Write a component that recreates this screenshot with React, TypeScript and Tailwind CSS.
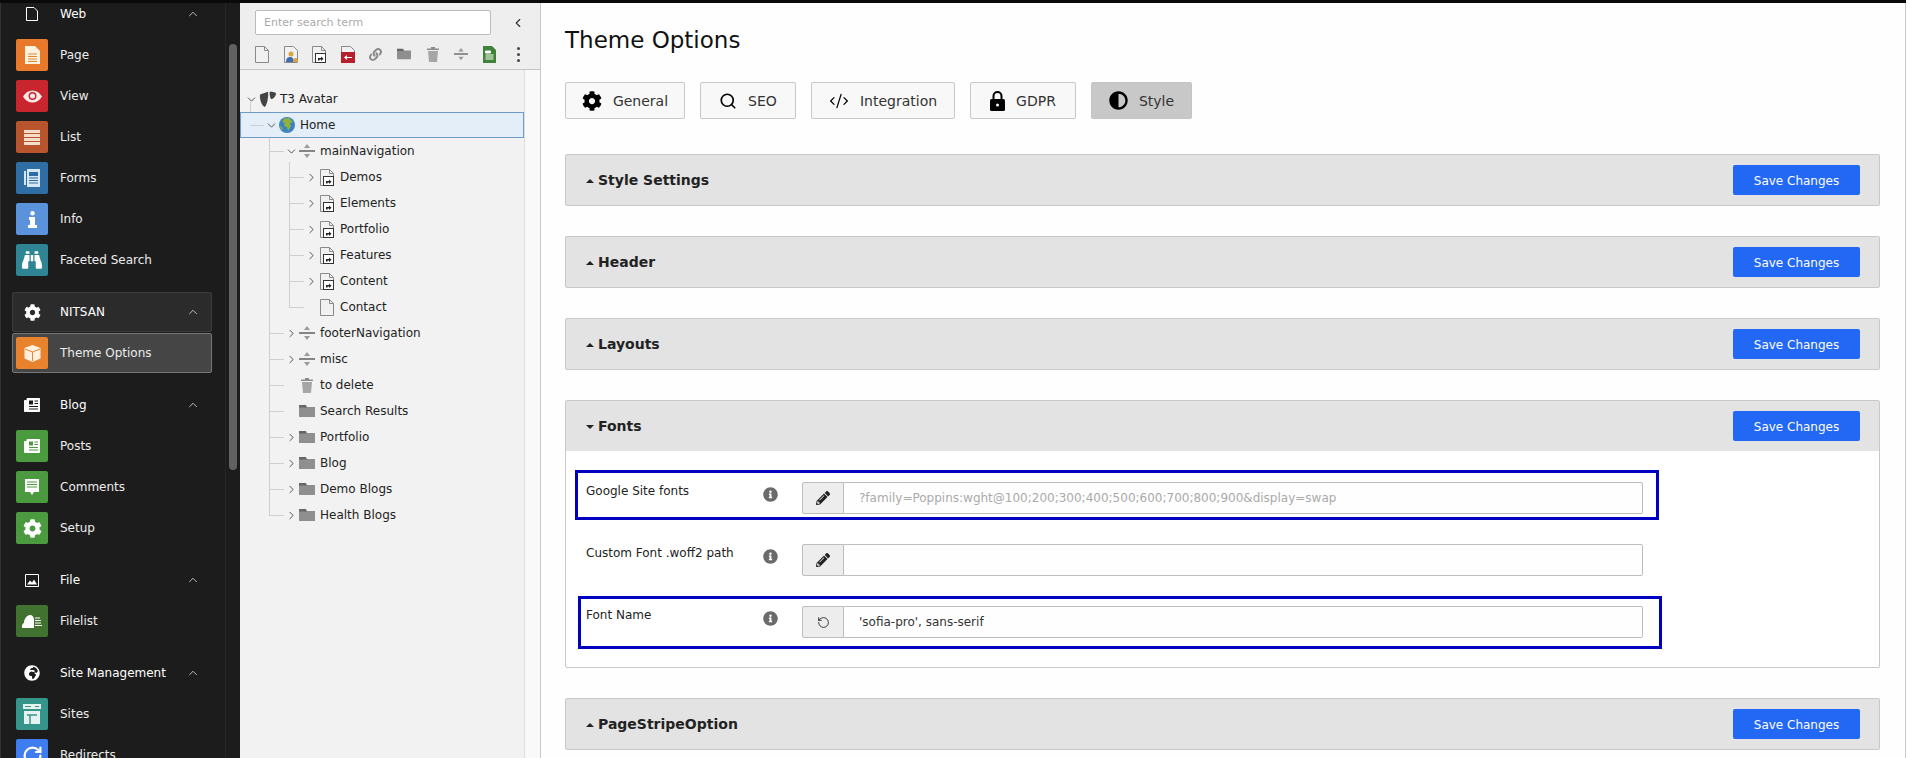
import { ChevronDown, ChevronLeft, ChevronRight, ChevronUp, CodeXml, RotateCcw, RotateCw, Search } from "lucide-react";
import type { ReactNode } from "react";
import {
  FaAdjust,
  FaBinoculars,
  FaCog,
  FaGlobeAfrica,
  FaInfoCircle,
  FaLink,
  FaPencilAlt,
} from "react-icons/fa";

const DocIcon = ({ fill = "#f1f1f1", stroke = "#8a8a8a" }) => (
  <svg width="14" height="17" viewBox="0 0 14 17">
    <path d="M.5.5h9l4 4v12H.5z" fill={fill} stroke={stroke} />
    <path d="M9.5.5v4h4" fill="none" stroke={stroke} />
  </svg>
);

const ShortcutDoc = () => (
  <svg width="14" height="17" viewBox="0 0 14 17">
    <path d="M.5.5h9l4 4v12H.5z" fill="#f1f1f1" stroke="#8a8a8a" />
    <path d="M9.5.5v4h4" fill="none" stroke="#8a8a8a" />
    <rect x="3.500" y="7.500" width="10" height="9" fill="#fff" stroke="#333" />
    <path d="M6 14.500v-2.500h3v-1.500l2.500 2.200-2.500 2.200v-1.400H7.500v1z" fill="#222" />
  </svg>
);

const PageTypeDivider = () => (
  <svg width="16" height="16" viewBox="0 0 16 16">
    <path d="M0 8h16" stroke="#555" strokeWidth="1.400" />
    <path d="M8 1l3 4H5zM8 15l-3-4h6z" fill="#9a9a9a" />
  </svg>
);

const FolderIcon = () => (
  <svg width="16" height="12" viewBox="0 0 16 12">
    <path d="M0 2h16v10H0z" fill="#8f8f8f" />
    <path d="M0 0h7l1 2.600H0z" fill="#666" />
  </svg>
);

const TrashIcon = () => (
  <svg width="12" height="15" viewBox="0 0 12 15">
    <path d="M1 4h10l-1 11H2z" fill="#a6a6a6" />
    <path d="M0 1.500h12V3H0zM4 0h4v1.500H4z" fill="#8c8c8c" />
  </svg>
);

const Globe = () => (
  <svg width="16" height="16" viewBox="0 0 16 16">
    <circle cx="8" cy="8" r="8" fill="#3b82c4" />
    <path d="M5 1.500l5-.5 4 4-3 1 1 3-3 5-1-4-3-1 1-3-3-1zM1 9l2 1 1 3-2-1z" fill="#8fb339" />
  </svg>
);

const Typo3 = () => (
  <svg width="17" height="17" viewBox="0 0 16 16">
    <path d="M1 3.200L8.500.8c.5 4.200-.6 11.800-3 14.200C3 14.500.2 8 1 3.200z" fill="#444" />
    <path d="M10 .8c3 0 6 .5 6 1.700 0 2-2.500 5-4.500 5C10.500 7.500 9.800 3 10 .8z" fill="#444" />
  </svg>
);

const Tile = ({ color, children }: { color: string; children: ReactNode }) => (
  <span
    style={{ backgroundColor: color }}
    className="flex h-8 w-8 shrink-0 items-center justify-center rounded-[2px] text-white"
  >
    {children}
  </span>
);

const PageGlyph = () => (
  <svg width="15" height="18" viewBox="0 0 15 18">
    <path d="M0 0h10l5 5v13H0z" fill="#fff3e0" />
    <path d="M3 8h9M3 10.500h9M3 13h9M3 15.500h9" stroke="#e0852e" strokeWidth="1" />
  </svg>
);

const EyeGlyph = () => (
  <svg width="19" height="13" viewBox="0 0 19 13">
    <path d="M0 6.500C2.500 2.500 5.500.5 9.500.5s7 2 9.500 6c-2.500 4-5.500 6-9.500 6S2.500 10.500 0 6.500z" fill="#fbe9e9" />
    <circle cx="9.500" cy="6" r="4" fill="#c9252e" />
    <circle cx="9.500" cy="6" r="2.500" fill="#fbe9e9" />
  </svg>
);

const ListGlyph = () => (
  <svg width="16" height="15" viewBox="0 0 16 15">
    <path d="M0 0h16v15H0z" fill="#f5dccb" />
    <path d="M0 3.500h16M0 7.500h16M0 11.500h16" stroke="#b9552c" strokeWidth="1.200" />
  </svg>
);

const FormGlyph = () => (
  <svg width="16" height="18" viewBox="0 0 16 18">
    <path d="M0 2h2v14H0z" fill="#d6e6f2" />
    <path d="M3 0h13v18H3z" fill="#d6e6f2" />
    <path d="M5 3h9v4H5z" fill="#2f6ea5" />
    <path d="M5 9h9M5 11.500h9M5 14h9" stroke="#2f6ea5" />
  </svg>
);

const InfoGlyph = () => (
  <svg width="9" height="17" viewBox="0 0 9 17">
    <circle cx="4.500" cy="2.200" r="2.200" fill="#fff" />
    <path d="M1 6h6v8h2v3H0v-3h2V9H1z" fill="#fff" />
  </svg>
);

const NewsGlyph = ({ bg }: { bg: string }) => (
  <svg width="16" height="14" viewBox="0 0 16 14">
    <path d="M.5 2.500h2v11h-2zM3 .5h12.500v13H3z" fill="#fff" stroke="#fff" />
    <path d="M5 2.500h4v4H5z" fill={bg} />
    <path d="M10.500 3h3.500M10.500 5.500h3.500M5 8.500h9M5 11h9" stroke={bg} />
  </svg>
);

const CommentGlyph = () => (
  <svg width="15" height="16" viewBox="0 0 15 16">
    <path d="M0 0h14v13H9l-2 3-2-3H0z" fill="#fff" />
    <path d="M2 3h10M2 5.500h10M2 8h10" stroke="#4b9a3f" />
  </svg>
);

const CubeGlyph = () => (
  <svg width="17" height="17" viewBox="0 0 17 17">
    <path d="M8.500 0l8 3v10.500L8.500 17l-8-3.500V3z" fill="#fff1df" />
    <path d="M1 4l7.500 3L16 4M8.500 7v9" stroke="#e9822c" fill="none" />
  </svg>
);

const CloudGlyph = () => (
  <svg width="20" height="13" viewBox="0 0 20 13">
    <path d="M0 13c-.3-3 .5-4.500 2-5 0-4 3-8 6-8 2.500 0 3.500 2 4 4v9z" fill="#fff" />
    <path d="M13 3h5M13 5.500h6M13 8h6M13 10.500h7" stroke="#fff" />
  </svg>
);

const SitesGlyph = () => (
  <svg width="18" height="20" viewBox="0 0 18 20">
    <path d="M0 0h18v5H0z" fill="#e6f2ef" />
    <path d="M1 7h16v13H1z" fill="#e6f2ef" />
    <path d="M4 11h10M7 11v9" stroke="#36958a" strokeWidth="1.500" />
    <path d="M2 2.500h6M12 2.500h4" stroke="#36958a" />
  </svg>
);

const LockGlyph = () => (
  <svg width="15" height="20" viewBox="0 0 15 20">
    <path d="M3.500 9V5a4 4 0 018 0v4" fill="none" stroke="#000" strokeWidth="2" />
    <rect x="0" y="8" width="15" height="12" rx="1.500" fill="#000" />
    <circle cx="7.500" cy="14" r="1.500" fill="#fff" />
  </svg>
);

const NavHeader = ({ icon, label, boxed }: { icon: ReactNode; label: string; boxed?: boolean }) => (
  <div
    className={`mx-3 flex h-10 items-center rounded-[2px] border text-white ${
      boxed ? "border-[#3c3c3c] bg-[#2b2b2b]" : "border-transparent"
    }`}
  >
    <span className="ml-[3px] flex w-8 shrink-0 justify-center text-white">{icon}</span>
    <span className="ml-3 flex-1">{label}</span>
    <ChevronUp size={14} strokeWidth={1.5} className="mr-[11px] text-[#cfcfcf]" />
  </div>
);

const NavItem = ({ tile, label, active }: { tile: ReactNode; label: string; active?: boolean }) => (
  <div
    className={`mx-3 flex h-10 items-center gap-3 rounded-[2px] border pl-[3px] text-[#ececec] ${
      active ? "border-[#777] bg-[#454545]" : "border-transparent"
    }`}
  >
    {tile}
    <span>{label}</span>
  </div>
);

const Sidebar = () => (
  <aside className="relative h-full w-[240px] shrink-0 overflow-hidden border-l border-[#333] bg-[#1c1c1c] text-[12px]">
    <div className="-ml-px -mt-[9px] flex w-[224px] flex-col gap-3">
      <div className="flex flex-col gap-px">
        <NavHeader
          label="Web"
          icon={
            <svg width="12" height="14" viewBox="0 0 12 14">
              <path d="M.5.500h7.500l3.500 3.500v9.500H.5z" fill="none" stroke="#fff" />
            </svg>
          }
        />
        <NavItem label="Page" tile={<Tile color="#e8792b"><PageGlyph /></Tile>} />
        <NavItem label="View" tile={<Tile color="#c9252e"><EyeGlyph /></Tile>} />
        <NavItem label="List" tile={<Tile color="#b9552c"><ListGlyph /></Tile>} />
        <NavItem label="Forms" tile={<Tile color="#2f6ea5"><FormGlyph /></Tile>} />
        <NavItem label="Info" tile={<Tile color="#5a93dc"><InfoGlyph /></Tile>} />
        <NavItem label="Faceted Search" tile={<Tile color="#2f8594"><FaBinoculars size={20} /></Tile>} />
      </div>
      <div className="flex flex-col gap-px">
        <NavHeader boxed label="NITSAN" icon={<FaCog size={17} />} />
        <NavItem active label="Theme Options" tile={<Tile color="#e9822c"><CubeGlyph /></Tile>} />
      </div>
      <div className="flex flex-col gap-px">
        <NavHeader label="Blog" icon={<NewsGlyph bg="#1c1c1c" />} />
        <NavItem label="Posts" tile={<Tile color="#4b9a3f"><NewsGlyph bg="#4b9a3f" /></Tile>} />
        <NavItem label="Comments" tile={<Tile color="#4b9a3f"><CommentGlyph /></Tile>} />
        <NavItem label="Setup" tile={<Tile color="#4b9a3f"><FaCog size={19} /></Tile>} />
      </div>
      <div className="flex flex-col gap-px">
        <NavHeader
          label="File"
          icon={
            <svg width="14" height="13" viewBox="0 0 14 13">
              <path d="M.5.500h13v12H.5z" fill="none" stroke="#fff" />
              <path d="M2 10.500l3-4 2 2 2-3 3 5z" fill="#fff" />
            </svg>
          }
        />
        <NavItem label="Filelist" tile={<Tile color="#42722f"><CloudGlyph /></Tile>} />
      </div>
      <div className="flex flex-col gap-px">
        <NavHeader label="Site Management" icon={<FaGlobeAfrica size={16} />} />
        <NavItem label="Sites" tile={<Tile color="#36958a"><SitesGlyph /></Tile>} />
        <NavItem label="Redirects" tile={<Tile color="#3f7cf0"><RotateCw size={21} strokeWidth={2.5} /></Tile>} />
      </div>
    </div>
    <div className="absolute right-[3px] top-[41px] h-[426px] w-2 rounded-full bg-[#616161]" />
    <div className="absolute right-[14px] top-0 h-full w-px bg-[#262626]" />
  </aside>
);

type TreeEntry = {
  label: string;
  depth: number;
  icon: ReactNode;
  arrow?: "open" | "closed";
  selected?: boolean;
};

const treeRows: TreeEntry[] = [
  { label: "T3 Avatar", depth: 0, icon: <Typo3 />, arrow: "open" },
  { label: "Home", depth: 1, icon: <Globe />, arrow: "open", selected: true },
  { label: "mainNavigation", depth: 2, icon: <PageTypeDivider />, arrow: "open" },
  { label: "Demos", depth: 3, icon: <ShortcutDoc />, arrow: "closed" },
  { label: "Elements", depth: 3, icon: <ShortcutDoc />, arrow: "closed" },
  { label: "Portfolio", depth: 3, icon: <ShortcutDoc />, arrow: "closed" },
  { label: "Features", depth: 3, icon: <ShortcutDoc />, arrow: "closed" },
  { label: "Content", depth: 3, icon: <ShortcutDoc />, arrow: "closed" },
  { label: "Contact", depth: 3, icon: <DocIcon /> },
  { label: "footerNavigation", depth: 2, icon: <PageTypeDivider />, arrow: "closed" },
  { label: "misc", depth: 2, icon: <PageTypeDivider />, arrow: "closed" },
  { label: "to delete", depth: 2, icon: <TrashIcon /> },
  { label: "Search Results", depth: 2, icon: <FolderIcon /> },
  { label: "Portfolio", depth: 2, icon: <FolderIcon />, arrow: "closed" },
  { label: "Blog", depth: 2, icon: <FolderIcon />, arrow: "closed" },
  { label: "Demo Blogs", depth: 2, icon: <FolderIcon />, arrow: "closed" },
  { label: "Health Blogs", depth: 2, icon: <FolderIcon />, arrow: "closed" },
];

const indentClass = ["pl-[2px]", "pl-[22px]", "pl-[42px]", "pl-[62px]"];
const stubClass = ["hidden", "left-[10px] w-[14px]", "left-[29px] w-[15px]", "left-[49px] w-[15px]"];

const TreeRow = ({ row }: { row: TreeEntry }) => (
  <div
    className={`relative flex h-[26px] items-center text-[12px] text-[#222] ${indentClass[row.depth]} ${
      row.selected ? "bg-[#e4eef8] outline outline-1 -outline-offset-1 outline-[#6d9ccb]" : ""
    }`}
  >
    <span className={`absolute top-1/2 h-px bg-[#cfcfcf] ${stubClass[row.depth]}`} />
    <span className="relative flex w-4 shrink-0 justify-center pl-[2px] text-[#333]">
      {row.arrow === "open" && <ChevronDown size={13} strokeWidth={1.5} />}
      {row.arrow === "closed" && <ChevronRight size={13} strokeWidth={1.5} />}
    </span>
    <span className="flex w-[18px] shrink-0 justify-center">{row.icon}</span>
    <span className="ml-1">{row.label}</span>
  </div>
);

const TreePanel = () => (
  <section className="flex h-full w-[301px] shrink-0 flex-col border-r border-[#c8c8c8] bg-[#f9f9f9]">
    <div className="h-[67px] shrink-0 border-b border-[#c3c3c3] bg-[#eeeeee] px-[15px] pt-[7px]">
      <div className="flex items-center">
        <input
          readOnly
          placeholder="Enter search term"
          className="h-[25px] w-[236px] rounded-[2px] border border-[#bbb] bg-white px-2 text-[11px] placeholder:text-[#aaa]"
        />
        <ChevronLeft size={14} strokeWidth={2} className="ml-5 text-[#333]" />
      </div>
      <div className="mt-[10px] flex h-[18px] items-center gap-[14.5px] text-[#888]">
        <span className="flex w-[14px] justify-center"><DocIcon /></span>
        <span className="flex w-[14px] justify-center">
          <svg width="14" height="17" viewBox="0 0 14 17">
            <path d="M.5.500h9l4 4v12H.5z" fill="#f1f1f1" stroke="#8a8a8a" />
            <path d="M2 16c0-4 2-5 4-5s4 1 4 5z" fill="#3d6cb5" />
            <circle cx="7" cy="8" r="2.500" fill="#d9a441" />
            <path d="M9 16c0-3 1-4 2.500-4s2.500 1 2.500 4z" fill="#d9a441" />
          </svg>
        </span>
        <span className="flex w-[14px] justify-center"><ShortcutDoc /></span>
        <span className="flex w-[14px] justify-center">
          <svg width="14" height="17" viewBox="0 0 14 17">
            <path d="M.5.500h9l4 4v12H.5z" fill="#f1f1f1" stroke="#8a8a8a" />
            <rect x="0" y="6" width="14" height="11" fill="#b5202a" />
            <path d="M11 11H6V9l-3 2.500L6 14v-2h5z" fill="#fff" />
          </svg>
        </span>
        <span className="flex w-[14px] justify-center"><FaLink size={13} className="text-[#8a8a8a]" /></span>
        <span className="flex w-[14px] justify-center"><FolderIcon /></span>
        <span className="flex w-[14px] justify-center"><TrashIcon /></span>
        <span className="flex w-[14px] justify-center"><PageTypeDivider /></span>
        <span className="flex w-[14px] justify-center">
          <svg width="13" height="17" viewBox="0 0 13 17">
            <path d="M0 0h9l4 4v13H0z" fill="#3f8239" />
            <path d="M2.500 5h5v2h-5zM2.500 9h8M2.500 11h8M2.500 13h8" stroke="#fff" fill="#fff" />
          </svg>
        </span>
        <span className="flex w-[14px] flex-col items-center gap-[3px]">
          <i className="h-[3px] w-[3px] rounded-full bg-[#444]" />
          <i className="h-[3px] w-[3px] rounded-full bg-[#444]" />
          <i className="h-[3px] w-[3px] rounded-full bg-[#444]" />
        </span>
      </div>
    </div>
    <div className="relative mr-[15px] flex-1 border-r border-[#dddddd] bg-[#f2f2f2] pt-[16px]">
      <span className="absolute left-[10px] top-[32px] h-[24px] w-px bg-[#cfcfcf]" />
      <span className="absolute left-[29px] top-[66px] h-[379px] w-px bg-[#cfcfcf]" />
      <span className="absolute left-[49px] top-[92px] h-[146px] w-px bg-[#cfcfcf]" />
      {treeRows.map((row, i) => (
        <TreeRow key={i} row={row} />
      ))}
    </div>
  </section>
);

const Tab = ({
  icon,
  label,
  active,
  width,
}: {
  icon: ReactNode;
  label: string;
  active?: boolean;
  width: string;
}) => (
  <button
    className={`flex h-[37px] items-center justify-center gap-[11px] rounded-[2px] border text-[14px] text-[#333] ${width} ${
      active ? "border-[#c4c4c4] bg-[#c8c8c8]" : "border-[#c8c8c8] bg-[#f8f8f8]"
    }`}
  >
    <span className="text-black">{icon}</span>
    <span className="pt-px">{label}</span>
  </button>
);

const PanelHeader = ({ label, open }: { label: string; open?: boolean }) => (
  <div className="flex h-[50px] items-center justify-between pl-5 pr-[19px]">
    <div className="flex items-center gap-1 pt-px text-[14px] font-bold text-[#222]">
      <span
        className={`mt-px h-0 w-0 border-x-[4px] border-x-transparent ${
          open ? "border-t-[4px] border-t-[#222]" : "border-b-[4px] border-b-[#222]"
        }`}
      />
      {label}
    </div>
    <button className="h-[30px] w-[127px] rounded-[2px] bg-[#2368f5] pt-px text-[12px] text-white">Save Changes</button>
  </div>
);

const Panel = ({ label }: { label: string }) => (
  <div className="rounded-[2px] border border-[#c8c8c8] bg-[#e3e3e3]">
    <PanelHeader label={label} />
  </div>
);

const FieldRow = ({
  label,
  icon,
  value,
  placeholder,
}: {
  label: string;
  icon: ReactNode;
  value?: string;
  placeholder?: string;
}) => (
  <div className="flex h-8 items-start">
    <span className="w-[177px] shrink-0">{label}</span>
    <FaInfoCircle size={15} className="mt-[5px] shrink-0 text-[#6b6b6b]" />
    <span className="ml-[24px] flex h-8 w-[42px] shrink-0 items-center justify-center rounded-l-[2px] border border-[#bdbdbd] bg-[#ededed] text-[#222]">
      {icon}
    </span>
    <input
      readOnly
      value={value ?? ""}
      placeholder={placeholder}
      className="h-8 w-[799px] rounded-r-[2px] border border-l-0 border-[#bdbdbd] bg-[#fefefe] px-[15px] text-[12px] text-[#333] placeholder:text-[#aaa]"
    />
  </div>
);

const Main = () => (
  <main className="flex h-full min-w-0 flex-1 flex-col border-r border-[#c8c8c8] bg-[#fefefe] pl-6 pr-[25px]">
    <h1 className="mt-[24px] text-[23px] leading-[27px] text-[#111]">Theme Options</h1>
    <div className="mt-[28px] flex gap-[15px]">
      <Tab width="w-[120px]" icon={<FaCog size={20} />} label="General" />
      <Tab width="w-[96px]" icon={<Search size={18} strokeWidth={2.2} />} label="SEO" />
      <Tab width="w-[144px]" icon={<CodeXml size={20} strokeWidth={1.5} />} label="Integration" />
      <Tab width="w-[106px]" icon={<LockGlyph />} label="GDPR" />
      <Tab active width="w-[101px]" icon={<FaAdjust size={19} />} label="Style" />
    </div>
    <div className="mt-[35px] flex flex-col gap-[30px]">
      <Panel label="Style Settings" />
      <Panel label="Header" />
      <Panel label="Layouts" />
      <div className="relative rounded-[2px] border border-[#c8c8c8] bg-white">
        <div className="bg-[#e3e3e3]">
          <PanelHeader open label="Fonts" />
        </div>
        <div className="flex h-[216px] flex-col gap-[30px] pl-5 pt-[31px] text-[12px] text-[#222]">
          <FieldRow
            label="Google Site fonts"
            icon={<FaPencilAlt size={14} />}
            placeholder="?family=Poppins:wght@100;200;300;400;500;600;700;800;900&display=swap"
          />
          <FieldRow label="Custom Font .woff2 path" icon={<FaPencilAlt size={14} />} />
          <FieldRow label="Font Name" icon={<RotateCcw size={13} strokeWidth={1.6} />} value="'sofia-pro', sans-serif" />
        </div>
        {/* annotation frames drawn over the form */}
        <div className="pointer-events-none absolute left-[9px] top-[69px] h-[50px] w-[1084px] border-[3px] border-[#0000c0]" />
        <div className="pointer-events-none absolute left-[12px] top-[195px] h-[53px] w-[1084px] border-[3px] border-[#0000c0]" />
      </div>
      <Panel label="PageStripeOption" />
    </div>
  </main>
);

export default function App() {
  return (
    <div className="flex h-[758px] w-[1906px] flex-col overflow-hidden bg-[#1c1c1c] font-['DejaVu_Sans',sans-serif]">
      <div className="h-[3px] shrink-0 bg-[#0a0a0a]" />
      <div className="flex min-h-0 flex-1">
        <Sidebar />
        <TreePanel />
        <Main />
      </div>
    </div>
  );
}
